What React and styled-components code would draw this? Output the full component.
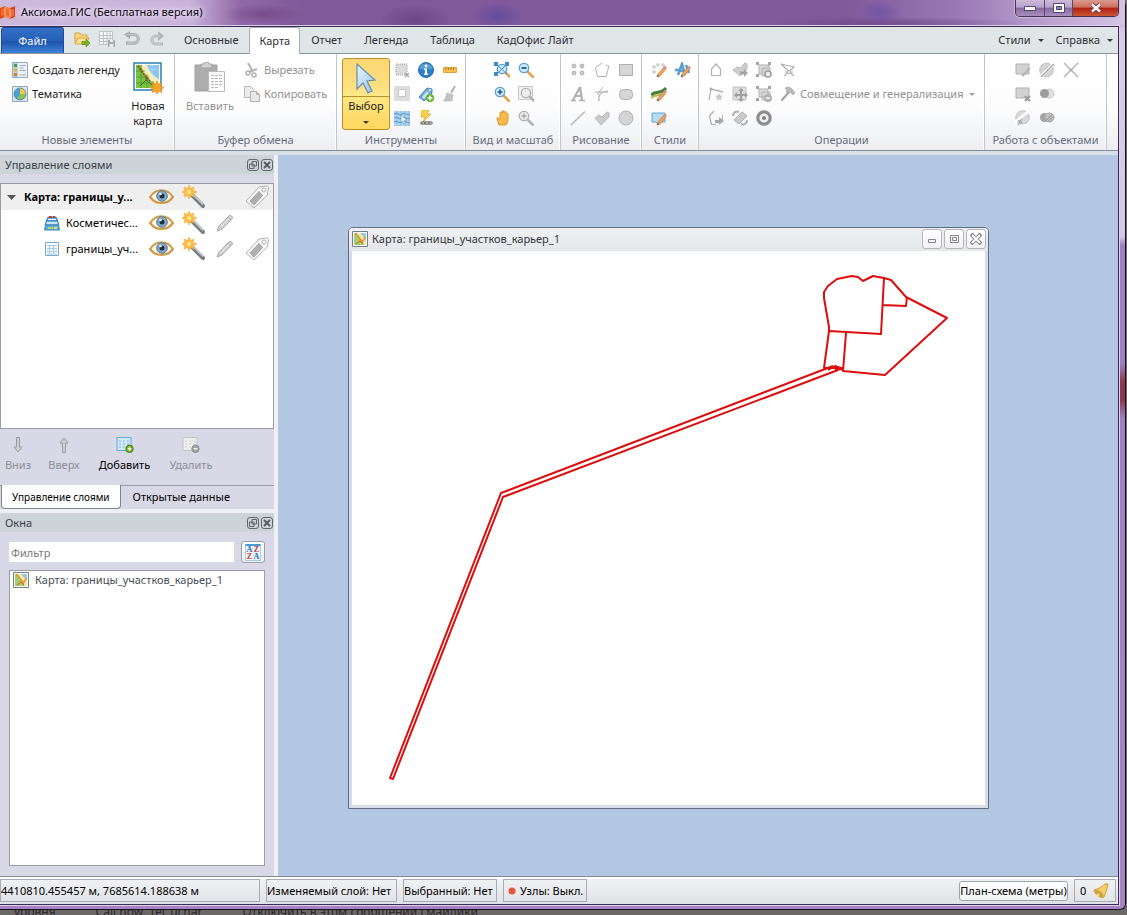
import React from "react";
import styled, { createGlobalStyle, css } from "styled-components";

const Global = createGlobalStyle`
  * { box-sizing: border-box; }
  html, body { margin: 0; padding: 0; }
  body, button, input {
    font-family: "Noto Sans", "Open Sans", "Liberation Sans", sans-serif;
    font-size: 11px;
    line-height: 16px;
  }
  button {
    margin: 0; padding: 0; border: 0; background: none; color: inherit;
    white-space: nowrap; text-align: center;
  }
`;

/* ---------- window frame ---------- */

const Desktop = styled.div`
  min-height: 100vh;
  display: flex;
  flex-direction: column;
  background: #6b6868;
  overflow: hidden;
`;

const Frame = styled.div`
  flex: 1;
  display: flex;
  flex-direction: column;
  margin-right: 1px;
  border-right: 1px solid #17101f;
  border-bottom: 1px solid #17101f;
  border-radius: 0 6px 6px 0;
  background: linear-gradient(180deg, #b9a0cf 0, #d9cce8 4%, #d5c8e6 26%, #a080c0 27%, #a080c0 40%, #8a3850 42%, #8a3850 44%, #a080c0 46%, #a684c4 100%);
`;

const TitleBar = styled.header`
  height: 26px;
  display: flex;
  align-items: flex-start;
  border-bottom: 1px solid #c8b3da;
  background:
    radial-gradient(ellipse 36px 16px at 415px 20px, rgba(80, 38, 110, 0.4), transparent),
    radial-gradient(ellipse 24px 14px at 498px 16px, rgba(70, 62, 160, 0.5), transparent),
    radial-gradient(ellipse 22px 12px at 880px 12px, rgba(90, 70, 165, 0.5), transparent),
    radial-gradient(ellipse 130px 6px at 900px 23px, rgba(80, 45, 110, 0.4), transparent),
    radial-gradient(ellipse 40px 10px at 262px 14px, rgba(105, 55, 110, 0.5), transparent),
    linear-gradient(90deg, #cdb9dc 0, #c9b3da 190px, #8f69a8 240px, #80599b 300px, #80599b 75%, #9a78b4 85%, #c3abd5 95%, #d5c5e4 100%);
`;

const TitleText = styled.h1`
  margin: 0 auto 0 5px;
  padding-top: 4px;
  font-size: 11px;
  font-weight: 400;
  line-height: 16px;
  color: #0b0612;
  text-shadow: 0 0 5px #fff, 0 0 8px #f0e4f8;
`;

const TitleIcon = styled.span`
  padding-top: 5px;
  height: 21px;
`;

const Caption = styled.div`
  display: flex;
  height: 17px;
  margin-right: 6px;
  border: 1px solid #453257;
  border-top: 0;
  border-radius: 0 0 5px 5px;
  overflow: hidden;
  box-shadow: 0 0 0 1px #cbb8da;
`;

const CaptionButton = styled.button`
  width: ${(p) => (p.$close ? 46 : 28)}px;
  display: flex;
  align-items: center;
  justify-content: center;
  border-left: ${(p) => (p.$first ? 0 : "1px solid #5d4770")};
  background: ${(p) =>
    p.$close
      ? "linear-gradient(180deg, #d99a8e 0, #cd6f5e 45%, #b3200f 50%, #cb5636 100%)"
      : "linear-gradient(180deg, #cbbad9 0, #b8a3cc 45%, #86699f 50%, #a98fc0 100%)"};
`;

const Client = styled.div`
  flex: 1;
  display: flex;
  flex-direction: column;
  margin: 0 6px 4px 0;
  border: 1px solid #3b2c55;
  border-left: 0;
  box-shadow: 0 0 0 1px #dccfe9;
  background: #d8dfe6;
  min-width: 0;
`;

const Behind = styled.div`
  height: 5px;
  overflow: hidden;
  display: flex;
  gap: 40px;
  padding-left: 14px;
  font-size: 12px;
  line-height: 10px;
  color: #2b272b;
`;
const BehindText = styled.span`
  height: 10px;
  margin-top: -3px;
`;

/* ---------- ribbon ---------- */

const TabRow = styled.nav`
  height: 27px;
  display: flex;
  align-items: flex-end;
  padding: 0 5px 0 1px;
  background: #e0e5e8;
  border-bottom: 1px solid #8d929c;
`;

const FileButton = styled.button`
  width: 63px;
  height: 26px;
  border: 1px solid #1c4a9c;
  border-bottom: 0;
  border-radius: 3px 3px 0 0;
  color: #fff;
  background: linear-gradient(180deg, #3470c4 0, #2560b8 50%, #1d53ab 55%, #3f83da 100%);
`;

const QuickAccess = styled.div`
  display: flex;
  gap: 1px;
  margin: 0 4px 0 6px;
  height: 26px;
`;

const Tab = styled.button`
  height: 26px;
  padding: 0 ${(p) => (p.$active ? 9 : 11)}px;
  color: #2f2f33;
  ${(p) =>
    p.$active &&
    css`
      height: 27px;
      margin-bottom: -1px;
      border: 1px solid #a9aeb6;
      border-bottom: 0;
      border-radius: 3px 3px 0 0;
      background: #fff;
    `}
`;

const MenuButton = styled.button`
  display: flex;
  align-items: center;
  gap: 7px;
  height: 26px;
  color: #2f2f33;
  margin-left: ${(p) => (p.$push ? "auto" : "12px")};
`;

const Ribbon = styled.div`
  height: 97px;
  display: flex;
  overflow: hidden;
  background: linear-gradient(180deg, #fff 0, #fdfdfe 55%, #eceef1 100%);
  border-bottom: 1px solid #868a93;
`;

const Group = styled.section`
  flex: none;
  width: ${(p) => p.$w}px;
  display: flex;
  flex-direction: column;
  border-right: 1px solid #c3c7cd;
  box-shadow: inset -1px 0 #fff;
`;

const GroupBody = styled.div`
  display: flex;
  height: 76px;
  padding: 4px 0 0 ${(p) => p.$pad || 5}px;
`;

const GroupName = styled.h2`
  margin: 0;
  font-size: 11px;
  font-weight: 400;
  line-height: 20px;
  text-align: center;
  white-space: nowrap;
  color: #666b7c;
`;

const IconGrid = styled.div`
  display: grid;
  grid-template-columns: repeat(${(p) => p.$cols}, 24px);
  grid-auto-rows: 24px;
`;

const IconButton = styled.button`
  width: 24px;
  height: 24px;
  display: grid;
  place-items: center;
`;

const Stack = styled.div`
  display: flex;
  flex-direction: column;
  margin-left: ${(p) => p.$gap || 0}px;
`;

const RowButton = styled.button`
  height: 24px;
  display: flex;
  align-items: center;
  color: ${(p) => (p.disabled ? "#929292" : "#1e1e1e")};
`;

const IconCell = styled.span`
  width: 24px;
  height: 24px;
  display: grid;
  place-items: center;
`;

const BigButton = styled.button`
  width: 48px;
  height: 72px;
  margin-left: ${(p) => p.$gap || 0}px;
  display: flex;
  flex-direction: column;
  align-items: center;
  padding-top: 4px;
  line-height: 15px;
  color: ${(p) => (p.disabled ? "#929292" : "#1e1e1e")};
`;
const BigLabel = styled.span`
  padding-top: 4px;
  white-space: normal;
`;

const SelectButton = styled.button`
  width: 48px;
  height: 72px;
  display: flex;
  flex-direction: column;
  align-items: center;
  border: 1px solid #b98f2a;
  border-radius: 3px;
  color: #1e1e1e;
  background: linear-gradient(180deg, #fbd873 0, #fddf80 40%, #ffe987 52%, #ffe27a 65%, #ffd75e 100%);
`;
const SelectTop = styled.span`
  width: 100%;
  height: 38px;
  display: grid;
  place-items: center;
  border-bottom: 1px solid #b98f2a;
`;
const SelectLabel = styled.span`
  line-height: 18px;
  height: 24px;
`;

/* ---------- docks ---------- */

const Body = styled.div`
  flex: 1;
  display: flex;
  padding-top: 4px;
`;

const Docks = styled.aside`
  flex: none;
  width: 278px;
  display: flex;
  flex-direction: column;
  border-right: 4px solid #eef0f5;
  background: #d8d8e6;
`;

const DockTitle = styled.div`
  height: 19px;
  display: flex;
  align-items: center;
  gap: 2px;
  padding: 0 1px 0 5px;
  background: #ccd3d9;
  color: #3b3f46;
`;
const DockName = styled.h2`
  margin: 0 auto 0 0;
  font-size: 11px;
  font-weight: 400;
`;
const DockButton = styled.button`
  width: 12px;
  height: 12px;
  display: grid;
`;

const Tree = styled.ul`
  list-style: none;
  margin: 9px 0 0;
  padding: 0;
  height: 246px;
  border: 1px solid #9a9aa8;
  background: #fff;
`;

const TreeRow = styled.li`
  height: 26px;
  display: grid;
  grid-template-columns: 144px 32px 33px 30px 33px;
  align-items: center;
  justify-items: center;
  background: ${(p) => (p.$root ? "#efefef" : "#fff")};
  font-weight: ${(p) => (p.$root ? 700 : 400)};
  color: #000;
`;
const TreeName = styled.span`
  justify-self: start;
  width: 100%;
  display: flex;
  align-items: center;
  gap: ${(p) => (p.$root ? 8 : 6)}px;
  padding-left: ${(p) => (p.$root ? 6 : 43)}px;
  white-space: nowrap;
`;
const TreeToggle = styled.button`
  width: 32px;
  height: 26px;
  display: grid;
  place-items: center;
`;

const LayerTools = styled.div`
  height: 56px;
  display: flex;
  align-items: flex-start;
  padding: 8px 0 0 6px;
`;
const LayerTool = styled.button`
  width: ${(p) => p.$w}px;
  display: flex;
  flex-direction: column;
  align-items: center;
  gap: 4px;
  color: ${(p) => (p.disabled ? "#8e8e98" : "#000")};
`;

const DockTabs = styled.div`
  height: 24px;
  display: flex;
  align-items: flex-start;
  border-top: 1px solid #9a9aa8;
`;
const DockTab = styled.button`
  height: ${(p) => (p.$active ? 24 : 22)}px;
  padding: 0 ${(p) => (p.$active ? 10 : 12)}px;
  color: #000;
  ${(p) =>
    p.$active &&
    css`
      margin: -1px 0 0 1px;
      border: 1px solid #7f838c;
      border-top: 0;
      border-radius: 0 0 4px 4px;
      background: #fff;
      font-size: 10px;
    `}
`;

const DockGap = styled.div`
  height: 4px;
  background: #eef0f5;
`;

const FilterRow = styled.div`
  display: flex;
  align-items: center;
  gap: 7px;
  padding: 9px 9px 7px;
`;
const Filter = styled.input`
  flex: 1;
  min-width: 0;
  height: 20px;
  padding: 0 2px;
  border: 0;
  background: #fff;
  color: #222;
  &::placeholder { color: #77777c; opacity: 1; }
`;
const SortButton = styled.button`
  width: 24px;
  height: 22px;
  display: grid;
  place-items: center;
  border: 1px solid #9b9fa8;
  border-radius: 3px;
  background: linear-gradient(180deg, #fff, #eef0f4);
`;

const WindowList = styled.ul`
  flex: 1;
  list-style: none;
  margin: 0 9px 10px;
  padding: 0 3px;
  border: 1px solid #9a9aa8;
  background: #fff;
`;
const WindowItem = styled.li`
  height: 18px;
  display: flex;
  align-items: center;
  gap: 6px;
  color: #4a4d55;
`;

/* ---------- document area ---------- */

const Workspace = styled.main`
  position: relative;
  flex: 1;
  overflow: hidden;
  background: #b3c7e2;
`;

const MapWindow = styled.section`
  position: absolute;
  left: 70px;
  top: 72px;
  width: 641px;
  height: 582px;
  display: flex;
  flex-direction: column;
  border: 1px solid #5f6c82;
  border-radius: 5px 5px 0 0;
  background: #d8dce6;
  padding: 0 3px 3px;
`;
const MapTitle = styled.div`
  height: 23px;
  margin: 0 -3px;
  padding: 0 2px 1px 3px;
  display: flex;
  align-items: center;
  gap: 2px;
  border-radius: 4px 4px 0 0;
  background: linear-gradient(180deg, #eef0f1, #e5e8eb);
  color: #34373d;
`;
const MapName = styled.h2`
  margin: 0 auto 0 2px;
  font-size: 11px;
  font-weight: 400;
`;
const MapButton = styled.button`
  width: 20px;
  height: 20px;
  display: grid;
  place-items: center;
  border: 1px solid #b4b6ba;
  border-radius: 3px;
  background: linear-gradient(180deg, #fff, #f1f1f3);
`;
const MapCanvas = styled.div`
  flex: 1;
  background: #fff;
  display: flex;
`;

/* ---------- status bar ---------- */

const StatusBar = styled.footer`
  height: 28px;
  display: flex;
  align-items: center;
  gap: 6px;
  padding-right: 2px;
  border-top: 1px solid #84888f;
  box-shadow: inset 0 2px #fff;
  background: linear-gradient(180deg, #f2f3f5, #dfe2e5);
  color: #000;
  white-space: nowrap;
`;
const StatusCell = styled.div`
  height: 23px;
  width: ${(p) => p.$w}px;
  display: flex;
  align-items: center;
  gap: ${(p) => p.$gap || 0}px;
  padding-left: ${(p) => p.$pad || 0}px;
  border: 1px solid #a8abb1;
  overflow: hidden;
`;
const StatusSpacer = styled.span`
  flex: 1;
`;
const Projection = styled.button`
  width: 109px;
  height: 20px;
  border: 1px solid #a0a4ab;
  border-radius: 3px;
  background: linear-gradient(180deg, #fff, #f1f2f4);
`;

/* ---------- drawings ---------- */

const Svg = ({ s = 16, w, h, box, children }) => (
  <svg width={w || s} height={h || s} viewBox={box || `0 0 ${w || s} ${h || s}`} fill="none" aria-hidden="true" display="block">
    {children}
  </svg>
);

const Caret = ({ color = "#3a3a3e" }) => (
  <Svg w={6} h={3}><path d="M0 0h6L3 3z" fill={color} /></Svg>
);

const G = "#b0b0b0";
const L = "#dadada";

const Pencil = () => (
  <g>
    <path d="M6 15l1-3 6-7 2 2-6 7z" fill="#f0a55a" stroke="#b06a2b" strokeWidth=".6" />
    <path d="M12.4 5.6l1.6-1.8 2 1.8-1.6 1.8z" fill="#d98a9c" />
    <path d="M6 15l.7-2 1.3 1.3z" fill="#444" />
  </g>
);
const Lens = ({ gray, children, x = 6, y = 6 }) => (
  <g>
    <path d={`M${x + 4} ${y + 4}l5 5`} stroke={gray ? "#b4b4b4" : "#e6a24a"} strokeWidth="2.600" strokeLinecap="round" />
    <circle cx={x} cy={y} r="4.700" fill={gray ? "#ececec" : "#cdeafa"} stroke={gray ? "#b0b0b0" : "#5a9dce"} strokeWidth="1.300" />
    {children}
  </g>
);

const icons = {
  logo: (
    <>
      <path d="M0 3l5-2v11l-5 2z" fill="#e2491f" /><path d="M5 1l5 2v11l-5-2z" fill="#f4844c" /><path d="M10 3l5-2v11l-5 2z" fill="#dc4018" />
      <path d="M1 4l4-1 5 2 4-1v7l-4 1-5-2-4 1z" fill="#f26a30" /><path d="M5 2v10M10 4v9" stroke="#ffd2b0" strokeWidth=".8" />
    </>
  ),
  open: (
    <>
      <path d="M1 12V2h5l1 2h6v3" fill="#f8d87a" stroke="#d6a640" /><path d="M1 13l3-6h11l-3 6z" fill="#fbe39a" stroke="#d6a640" />
      <path d="M8 10.500h4V8l4 4-4 4v-2.500H8z" fill="#7ab51d" stroke="#5a9418" strokeWidth=".7" />
    </>
  ),
  save: (
    <>
      <path d="M.5.500h13v13H.5zM.5 4.500h13M.5 7.500h13M.5 10.500h13M4.500.500v13M8 .500v13M11 .500v13" stroke="#bfc2c5" fill="#f5f6f7" />
      <path d="M9 9h7v7H9z" fill="#a6a9ad" /><path d="M11 9h3v2h-3zM10.500 13h4v3h-4z" fill="#eee" />
    </>
  ),
  undo: <><path d="M2 3.500h8a4.300 4.300 0 0 1 0 8.600H2" stroke="#a9acaf" strokeWidth="3.200" /><path d="M6 0L0 3.500 6 8z" fill="#a9acaf" /><path d="M3 3.500h7a4.300 4.300 0 0 1 0 8.600H3" stroke="#c6c9cb" strokeWidth="1.200" /></>,
  redo: <><path d="M12 5H7a4 4 0 0 0 0 8h7" stroke="#b3b6b9" strokeWidth="3" /><path d="M9 0l6 5-6 5z" fill="#b3b6b9" /><path d="M11 5H7a4 4 0 0 0 0 8h6" stroke="#cfd1d3" strokeWidth="1.200" /></>,
  legend: (
    <>
      <path d="M.5.500h15v15H.5z" fill="#eef4f8" stroke="#93a9b8" /><path d="M1 1h5v14H1z" fill="#b9d3e4" />
      <path d="M2 2h3v3H2z" fill="#4c9a3a" /><path d="M2 6.500h3v3H2z" fill="#f0b030" /><path d="M2 11h3v3H2z" fill="#e87820" />
      <path d="M7.500 3.500H14M7.500 6H12M7.500 8.500H14M7.500 13H14" stroke="#98acba" />
    </>
  ),
  theme: (
    <>
      <path d="M.5.500h15v15H.5z" fill="#dbe7ef" stroke="#93a9b8" /><circle cx="8" cy="8" r="6" fill="#49a0d6" />
      <path d="M8 8V2a6 6 0 0 1 6 6z" fill="#f5c842" /><path d="M8 8h6a6 6 0 0 1-9 5z" fill="#8cc152" /><circle cx="8" cy="8" r="6" stroke="#3980a8" strokeWidth=".7" />
    </>
  ),
  newMap: (
    <>
      <path d="M2 1h27v27H2z" fill="#fff" stroke="#2d7fae" strokeWidth="1.500" /><path d="M4 3h23v23H4z" fill="#7cc23c" />
      <path d="M12 3h15v16C21 16 15 10 12 3z" fill="#86c6f0" /><path d="M9 3h6c2 6 6 11 12 14v7C19 21 12 12 9 3z" fill="#f7ecbe" />
      <path d="M4 9h9M4 15h13M4 21h18M9 3v23M15 12v14M21 19v7" stroke="#4d9c3a" strokeWidth=".8" /><path d="M15 7h12M20 3v9" stroke="#b4dcf5" strokeWidth=".8" />
      <path d="M6 4c3 5 7 10 12 15" stroke="#b52a1a" strokeWidth="1.500" strokeDasharray="2 1" /><path d="M8 24l6-6 6 5M14 18v-3" stroke="#3e6f20" />
      <path d="M25 19l1.500 3.200 3.300-1.200-1.200 3.300 3.200 1.500-3.200 1.400 1.200 3.300-3.300-1.200L25 32l-1.500-2.700-3.300 1.200 1.200-3.300-3.200-1.400 3.200-1.500-1.200-3.300 3.300 1.200z" fill="#f9a52a" stroke="#ee8a1a" strokeWidth=".7" />
    </>
  ),
  paste: (
    <>
      <path d="M1 3h22v26H1z" fill="#adadad" stroke="#a0a0a0" /><path d="M7 2h3l1-2h3l1 2h3v4H7z" fill="#d2d2d2" stroke="#a0a0a0" />
      <path d="M14.500 9.500h16v20h-16z" fill="#fbfbfb" stroke="#bababa" />
      <path d="M17 13.500h11M17 16.500h11M17 19.500h11M17 22.500h11M17 25.500h8" stroke="#b8b8b8" strokeDasharray="3 1" />
    </>
  ),
  cut: <><path d="M4 1l5 9M13 7l-8 3" stroke="#b4b4b4" strokeWidth="2" /><circle cx="4" cy="11" r="2" stroke={G} strokeWidth="1.500" /><circle cx="10" cy="13" r="2" stroke={G} strokeWidth="1.500" /></>,
  copy: <><path d="M.5.500h6l3 3v8h-9z" fill="#ececec" stroke="#b8b8b8" /><path d="M6.500 5.500h6l3 3v7h-9z" fill="#e8e8e8" stroke={G} /><path d="M12.500 5.500v3h3" stroke={G} /></>,
  arrow: (
    <>
      <defs>
        <linearGradient id="arrowFill" x1="0" y1="0" x2="1" y2="1"><stop offset="0" stopColor="#f0f7fc" /><stop offset="1" stopColor="#8fc0e6" /></linearGradient>
      </defs>
      <path d="M7 2l18 16-8 1 5 10-4 2-5-10-6 6z" fill="url(#arrowFill)" stroke="#5e8fb6" strokeWidth="1.200" />
    </>
  ),
  selRect: <><path d="M2 2h11v11H2z" fill="#dcdcdc" stroke="#a2a2a2" strokeDasharray="1 1" /><path d="M11 11l4 4M15 11l-4 4" stroke="#a8a8a8" strokeWidth="1.500" /></>,
  info: <><circle cx="8" cy="8" r="7.500" fill="#2f80c8" stroke="#2a6cab" /><path d="M1.500 7a6.500 5.500 0 0 1 13 0z" fill="#6eb0e4" opacity=".6" /><circle cx="8" cy="4" r="1.400" fill="#fff" /><path d="M6 6.500h3v5h1V13H6v-1.500h1V8H6z" fill="#fff" /></>,
  ruler: <><path d="M1.500 5.500h13v5h-13z" fill="#f8c052" stroke="#dda03a" /><path d="M4 6v2M6.500 6v2M9 6v2M11.500 6v2" stroke="#a87420" /></>,
  frame: <><path d="M0 0h16v15H0z" fill="#dcdcdc" /><path d="M4.500 3.500h7v7h-7z" fill="#fff" stroke="#c4c4c4" /></>,
  tagPlus: <><path d="M1 11L9 2l5 1v4l-8 8z" fill="#6ba9d8" stroke="#5587b0" /><path d="M4 11l5-6 2 2-5 6z" fill="#c8e4f5" /><circle cx="12" cy="4" r="1" fill="#fff" /><circle cx="12" cy="12" r="4" fill="#62b028" /><path d="M12 9.500v5M9.500 12h5" stroke="#fff" strokeWidth="1.500" /></>,
  broom: <><path d="M13 0L9 7" stroke="#b0b0b0" strokeWidth="2" /><path d="M5 7l6 2-1 6H1c3-2 3-5 4-8z" fill="#c9c9c9" stroke="#b0b0b0" strokeWidth=".7" /><path d="M4 14l2-5M7 14l1-5" stroke="#a8a8a8" strokeWidth=".7" /></>,
  waves: <><path d="M0 1h16v15H0z" fill="#9cc8ea" /><path d="M0 4q2-2 4 0t4 0 4 0 4 0M0 8q2-2 4 0t4 0 4 0 4 0M0 12q2-2 4 0t4 0 4 0 4 0" stroke="#5d97c8" /><path d="M0 2h16M0 6h16M0 10h16M0 14h16" stroke="#c7e3f7" strokeDasharray="2 2" /><path d="M7 5l6 5-3 .5 1.500 3-1.500.5-1.500-3L7 13z" fill="#e8f4fc" stroke="#6c99bb" strokeWidth=".6" /></>,
  bolt: <><path d="M4 0h7L9 4h4L5 12l2-5H3z" fill="#fbd04a" stroke="#e0ab30" strokeWidth=".8" /><path d="M4 13h9" stroke="#7d7a74" strokeWidth="3.600" strokeLinecap="round" /><path d="M4 13h2M8 13h2M11.500 13h2" stroke="#ddd" /></>,
  zoomExt: <><Lens x={8} y={7} /><path d="M2 2l11 10M13 2L3 12" stroke="#4c92c8" strokeWidth="1" /><path d="M0 0h4v4H0zM11 0h4v4h-4zM0 10h4v4H0z" fill="#3f8bc8" /></>,
  zoomOut: <Lens><path d="M3.500 6h5" stroke="#1e5c94" strokeWidth="1.800" /></Lens>,
  zoomIn: <Lens><path d="M3.500 6h5M6 3.500v5" stroke="#1e5c94" strokeWidth="1.600" /></Lens>,
  zoomLayer: <><path d="M.5.500h14v13H.5z" fill="#efefef" stroke="#c8c8c8" /><Lens gray x={8} y={7} /></>,
  hand: <path d="M3 15L1 9c-.5-1.500 1-2 2-.5l1 1V3c0-1.500 2-1.500 2 0V2c0-1.800 2-1.800 2 0v.5c.3-1.500 2-1.300 2 .3V4c.3-1.200 2-1 2 .3V11l-2 4z" transform="translate(2 0)" fill="#f8bb4a" stroke="#d8912c" strokeWidth=".9" />,
  zoomSel: <Lens gray><path d="M3.500 6h5M6 3.500v5" stroke="#a4a4a4" strokeWidth="1.400" /></Lens>,
  points: <>{[[4, 4], [12, 4], [4, 11], [12, 11]].map(([x, y]) => <circle key={x + "-" + y} cx={x} cy={y} r="1.900" fill="#cfcfcf" stroke="#adadad" />)}</>,
  polyline: <path d="M8 1L1.500 6l2 8.500h8.500L15 4l-3-1" stroke={G} />,
  rect: <path d="M1.500 2.500h13v11h-13z" fill="#d6d6d6" stroke={G} />,
  text: <><path d="M10 1l2 13M10 1L3 14M6 10h6" stroke={G} strokeWidth="2.200" /><path d="M1 14.500h5M9 14.500h6" stroke={G} strokeWidth="1.400" /></>,
  arc: <><path d="M5 15c-1-6 1-9 9-10" stroke={G} strokeWidth="1.200" /><path d="M1 6h13M9 1L3 9" stroke={G} /></>,
  round: <rect x="1.500" y="3.500" width="13" height="10" rx="4" fill="#d6d6d6" stroke={G} />,
  line: <path d="M1 15L15 1.500" stroke={G} strokeWidth="1.200" />,
  poly: <path d="M1 8l4-3 3 2 5-5 2 1v4l-8 8z" fill="#cbcbcb" stroke={G} strokeWidth=".8" />,
  ellipse: <circle cx="8" cy="8" r="7" fill="#d4d4d4" stroke={G} />,
  ptStyle: <><g fill="#d8d8d8" stroke="#bbb" strokeWidth=".5"><circle cx="3" cy="5" r="1.500" /><circle cx="7" cy="3" r="1.500" /><circle cx="3" cy="10" r="1.500" /><circle cx="12" cy="3" r="1.500" /></g><Pencil /></>,
  txtStyle: <><path d="M3 13L7 2l3 11M4 9h10M11 3l3 8M0 8h5" stroke="#5b9fd2" strokeWidth="2.600" /><Pencil /></>,
  lineStyle: <><path d="M0 9C5 4 10 9 15 2" stroke="#4a7f3e" strokeWidth="3.200" /><path d="M0 12C5 7 10 12 15 5" stroke="#b9b84a" strokeWidth="2" /><Pencil /></>,
  regStyle: <><path d="M1 3h13v9H9l-2 2-2-2H1z" fill="#b5daf2" stroke="#6aa3cc" /><Pencil /></>,
  house: <path d="M3.500 13.500V7L8 2l4.500 5v6.500z" stroke={G} strokeWidth="1.200" />,
  polyAdd: <><path d="M1 8l4-3 3 1 5-5 2 1v5l-7 7z" fill="#cdcdcd" stroke="#bcbcbc" /><path d="M8 9.500h4V7l4 4-4 4v-2.500H8z" fill="#a4a4a4" /></>,
  groupGear: <><path d="M3 3h10v9H3z" fill={L} stroke={G} /><path d="M6 6h8v8H6z" fill="#d2d2d2" stroke={G} /><g fill="#a4a4a4"><path d="M0 0h3v3H0zM12 0h3v3h-3zM0 12h3v3H0z" /></g><circle cx="12" cy="12" r="3" fill="#eee" stroke="#9c9c9c" strokeWidth="1.500" /></>,
  node: <><path d="M1 2l13 3-10 9M14 14L1 2" stroke={G} strokeWidth="1.200" /><path d="M5 10h8" stroke={G} /><circle cx="9" cy="10" r="1.500" fill="#fff" stroke={G} /></>,
  lineStar: <><path d="M1 14L3 3l12 3" stroke={G} strokeWidth="1.300" /><circle cx="3" cy="3" r="1.600" fill={G} /><path d="M11 7l1.200 2.600 3 .2-2.300 2 .8 3-2.700-1.600-2.700 1.600.8-3-2.300-2 3-.2z" fill="#cacaca" /></>,
  move: <><path d="M1 1h13v13H1z" fill="#dcdcdc" stroke="#c4c4c4" /><path d="M9 4v10M4 9h10" stroke="#a0a0a0" strokeWidth="2" /><path d="M9 2l3 3H6zM9 16l3-3H6zM16 9l-3-3v6zM2 9l3-3v6z" fill="#a0a0a0" /></>,
  groupMinus: <><path d="M3 3h9v8H3zM6 6h8v8H6z" fill={L} stroke={G} /><path d="M0 0h3v3H0zM12 0h3v3h-3zM0 12h3v3H0z" fill="#a4a4a4" /><circle cx="12" cy="12" r="4" fill="#b0b0b0" /><path d="M10 12h4" stroke="#fff" strokeWidth="1.500" /></>,
  hammer: <><path d="M9 6L2 14" stroke="#a4a4a4" strokeWidth="2.200" strokeLinecap="round" /><path d="M5 2l4-1 3 2 3 4-2 2-3-3-2 1-2-1 1-2z" fill="#bababa" stroke="#a4a4a4" strokeWidth=".7" /></>,
  pentArrow: <><path d="M6 1L1.500 6l2 8.500H8" stroke={G} strokeWidth="1.200" /><path d="M14.500 5v5" stroke={G} /><path d="M7 10h4V7l5 4-5 4v-2H7z" fill="#a8a8a8" /></>,
  rotate: <><path d="M2 10l8-8 5 4-8 8z" fill="#cacaca" stroke={G} /><path d="M1 6c0-4 3-5 6-4M15 10c0 4-3 5-6 4" stroke={G} strokeWidth="2" /></>,
  target: <><circle cx="8" cy="8" r="6.200" stroke="#8d8d8d" strokeWidth="3.200" fill="#f0f0f0" /><circle cx="8" cy="8" r="2" fill="#808080" /></>,
  objEdit: <><path d="M1 2h13v10H1z" fill="#d2d2d2" stroke={G} /><path d="M6 14l8-9 1.500 1.500-7 8z" fill="#b6b6b6" /></>,
  objSplit: <><circle cx="7.500" cy="8" r="6.800" fill="#d4d4d4" stroke="#c0c0c0" /><path d="M1 15L15 2" stroke="#fff" strokeWidth="3" /><path d="M2 15L15 2" stroke="#a4a4a4" strokeWidth="1.300" /></>,
  cross: <><path d="M1 1l14 14M15 1L1 15" stroke="#adadad" strokeWidth="1.200" /><circle cx="8" cy="8" r="1.500" fill="#b4b4b4" /></>,
  objDel: <><path d="M1 2h13v10H1z" fill="#d2d2d2" stroke={G} /><path d="M10 10l5 5M15 10l-5 5" stroke="#999" strokeWidth="2" /></>,
  union: <><circle cx="10.500" cy="7.500" r="4.500" fill="#e0e0e0" stroke="#c4c4c4" /><circle cx="5.500" cy="7.500" r="4.500" fill="#9c9c9c" /></>,
  objCut: <><circle cx="7.500" cy="7.500" r="6.800" fill="#d8d8d8" stroke="#c4c4c4" /><path d="M0 12L14 1" stroke="#fff" strokeWidth="2.600" /><path d="M2 9l6 7h4z" fill="#fff" /><path d="M3 10l5 4M7 9l-4 6" stroke="#a4a4a4" strokeWidth="1.300" /></>,
  intersect: <><circle cx="5.500" cy="7.500" r="4.500" fill="#a4a4a4" /><circle cx="10.500" cy="7.500" r="4.500" fill="#c4c4c4" stroke="#a4a4a4" /><path d="M7 10.500l6-6M9 11.500l5-5" stroke="#8a8a8a" /></>,
};

const Icon = ({ name, s = 16 }) => <Svg s={s}>{icons[name]}</Svg>;

const Eye = () => (
  <Svg w={25} h={18}>
    <path d="M1 9C7 0 18 0 24 9 18 17 7 17 1 9z" fill="#fdf6e6" stroke="#d09a48" strokeWidth="2.200" />
    <circle cx="13" cy="8" r="5.300" fill="#84a9c6" stroke="#577b98" /><circle cx="13" cy="8" r="2.500" fill="#1b2f3e" /><circle cx="11.500" cy="6" r="1.300" fill="#e8f4ff" />
  </Svg>
);
const Wand = () => (
  <Svg w={24} h={24}>
    <path d="M9 9l12 12" stroke="#777b7e" strokeWidth="4" strokeLinecap="round" /><path d="M10 8.500l11 11" stroke="#c9cccf" strokeWidth="1.500" />
    <path d="M7 0l1.500 3.500L12 2l-1 3.500 4 1.500-4 1.500 1 3.500-3.500-1.500L7 14l-1.500-3.500L2 12l1-3.500L0 7l3-1.500L2 2l3.500 1.500z" fill="#fabd45" stroke="#f3a732" strokeWidth=".6" />
    <circle cx="7" cy="7" r="2" fill="#ffe695" />
  </Svg>
);
const GrayPencil = () => (
  <Svg w={18} h={18}><path d="M1 17l2-5L14 1l3 2.500L6 15z" fill="#d0d0d0" stroke="#a8a8a8" /><path d="M4.500 13L14.500 3" stroke="#f4f4f4" /><path d="M12 3l3 3" stroke="#aaa" /></Svg>
);
const Tag = () => (
  <Svg w={24} h={24}>
    <path d="M1 16L14 2l8-1c1 0 1.500 1 1.500 2l-1 7L9 23z" fill="#f5f5f5" stroke="#b2b2b2" /><path d="M5 16l9-9.500 3.500 4L9 20z" fill="#b0b0b0" stroke="#a0a0a0" />
    <circle cx="19" cy="5" r="2" fill="#fff" stroke="#b2b2b2" />
  </Svg>
);
const Cosmetic = () => (
  <Svg s={16}>
    <path d="M4 2h8l2 4H2z" fill="#5aa9e2" stroke="#3c82bc" /><path d="M2.500 6h11L15 10H1z" fill="#9ad0f3" stroke="#3c82bc" /><path d="M1.500 10h13l1 5H.5z" fill="#62abe0" stroke="#3c82bc" />
    <path d="M5 1h3v2H5zM9 1h2v2H9z" fill="#c83a34" /><path d="M4 12h5v2H4z" fill="#b4d85a" /><path d="M10 12h3v2h-3z" fill="#f2dc6a" /><path d="M3 8h10M4 4.500h8" stroke="#fff" />
  </Svg>
);
const TableIcon = () => (
  <Svg s={16}><path d="M1.500 1.500h13v13h-13z" fill="#f4f9fd" stroke="#7ba8cf" /><path d="M3 4.500h10M3 7.500h10M3 10.500h10M3 13h10M5.500 4v9M9.500 4v9" stroke="#a9c8e5" /></Svg>
);
const MapIcon = () => (
  <Svg s={16}>
    <path d="M.5.500h15v15H.5z" fill="#fff" stroke="#6b8288" /><path d="M2 2h12v12H2z" fill="#a4cc70" /><path d="M8 2h6v7z" fill="#96c8ea" /><path d="M4 2h4l6 7v5h-2z" fill="#f8e6a0" />
    <path d="M3.500 2l7 9 3-5" stroke="#e2902e" strokeWidth="1.400" /><path d="M4 13l4-3 3 3" stroke="#d0602c" />
  </Svg>
);
const Move = ({ up }) => (
  <Svg w={16} h={16}><path d={up ? "M8 1l4 5H9.500v9.500h-3V6H4z" : "M8 15l4-5H9.500V.5h-3V10H4z"} fill="#cfcfd6" stroke="#9a9aa2" /></Svg>
);
const LayerAdd = ({ off }) => (
  <Svg w={18} h={16}>
    <path d="M1 .5h14v13H1z" fill={off ? "#eee" : "#cfe9fb"} stroke={off ? "#c4c4c4" : "#62aade"} />
    <path d="M3 4h10M3 7h10M3 10h10" stroke={off ? "#dfdfdf" : "#a4d0ef"} strokeWidth="2" strokeDasharray="2 2" />
    <circle cx="13.500" cy="11.800" r="3.700" fill={off ? "#a2a2a2" : "#6cad1b"} stroke={off ? "#8e8e8e" : "#4a8110"} />
    <path d={off ? "M11.500 11.800h4" : "M11.500 11.800h4M13.500 9.800v4"} stroke="#fff" strokeWidth="1.300" />
  </Svg>
);
const FloatIcon = () => <Svg s={12}><rect x=".5" y=".5" width="11" height="11" rx="2.500" stroke="#62656b" /><path d="M5 2.500h4.500V7H5zM2.500 5H7v4.500H2.500z" stroke="#62656b" fill="#ccd3d9" /></Svg>;
const CloseIcon = () => <Svg s={12}><rect x=".5" y=".5" width="11" height="11" rx="2.500" stroke="#62656b" /><path d="M3 3l6 6M9 3L3 9" stroke="#585b61" strokeWidth="2" /></Svg>;

const SortGlyph = styled.span`
  display: grid;
  grid-template-columns: 7px 7px;
  grid-auto-rows: 7px;
  border: 1px solid #a8cbe2;
  border-top: 2px solid #4a9ad0;
  background: #e8f3fa;
  font-family: "Liberation Serif", serif;
  font-size: 8px;
  font-weight: 700;
  line-height: 7px;
`;
const SortLetter = styled.span`
  color: ${(p) => (p.$red ? "#c33a2c" : "#2868a6")};
`;

/* ---------- parts ---------- */

const Tools = ({ cols, names }) => (
  <IconGrid $cols={cols}>
    {names.map((n, i) => (n ? <IconButton key={i} aria-label={n}><Icon name={n} /></IconButton> : <span key={i} />))}
  </IconGrid>
);

const RibbonGroup = ({ name, w, pad, children }) => (
  <Group $w={w}>
    <GroupBody $pad={pad}>{children}</GroupBody>
    <GroupName>{name}</GroupName>
  </Group>
);

const DockHeader = ({ name }) => (
  <DockTitle>
    <DockName>{name}</DockName>
    <DockButton aria-label="Открепить"><FloatIcon /></DockButton>
    <DockButton aria-label="Закрыть"><CloseIcon /></DockButton>
  </DockTitle>
);

const layers = [
  { name: "Карта: границы_у...", root: true, tag: true },
  { name: "Косметичес...", icon: <Cosmetic />, pencil: true },
  { name: "границы_уч...", icon: <TableIcon />, pencil: true, tag: true },
];

const MapDrawing = () => (
  <svg width="100%" height="100%" viewBox="352 251 633 554" preserveAspectRatio="xMinYMin meet" fill="none" stroke="#dc0e0e" strokeWidth="2" strokeLinejoin="round">
    <path d="M829 331v-4l-5-29v-6l4-6 9-7 15-3 6 1 5 4 10-5 11 2 7 2 15 17 41 21-62 57-42-4 3-38" />
    <path d="M829 331l52 3 3-56M883 305l23 1 1-9M829 331l-5 37h19" />
    <path d="M833 366L501 493 390 778l3 1L503 497 838 370" />
    <path d="M828 370l7-4 8 3-8 1" />
  </svg>
);

export default function App() {
  return (
    <Desktop>
      <Global />
      <Frame>
        <TitleBar>
          <TitleIcon><Icon name="logo" /></TitleIcon>
          <TitleText>Аксиома.ГИС (Бесплатная версия)</TitleText>
          <Caption>
            <CaptionButton $first aria-label="Свернуть"><Svg w={12} h={5}><path d="M.5.500h11v4H.5z" fill="#fff" stroke="#55456a" /></Svg></CaptionButton>
            <CaptionButton aria-label="Развернуть"><Svg w={12} h={10}><path d="M.5.500h11v9H.5z" fill="#fff" stroke="#55456a" /><path d="M3.500 3.500h5v3h-5z" fill="#9a82b0" stroke="#55456a" /></Svg></CaptionButton>
            <CaptionButton $close aria-label="Закрыть"><Svg w={12} h={10}><path d="M2 1.500l8 7M10 1.500l-8 7" stroke="#5d3a44" strokeWidth="4" /><path d="M2 1.500l8 7M10 1.500l-8 7" stroke="#fff" strokeWidth="2.400" /></Svg></CaptionButton>
          </Caption>
        </TitleBar>
        <Client>
          <TabRow>
            <FileButton>Файл</FileButton>
            <QuickAccess>
              {["open", "save", "undo", "redo"].map((n) => <IconButton key={n} aria-label={n}><Icon name={n} /></IconButton>)}
            </QuickAccess>
            <Tab>Основные</Tab>
            <Tab $active>Карта</Tab>
            <Tab>Отчет</Tab>
            <Tab>Легенда</Tab>
            <Tab>Таблица</Tab>
            <Tab>КадОфис Лайт</Tab>
            <MenuButton $push>Стили<Caret /></MenuButton>
            <MenuButton>Справка<Caret /></MenuButton>
          </TabRow>
          <Ribbon>
            <RibbonGroup name="Новые элементы" w={175} pad={8}>
              <Stack>
                <RowButton><IconCell><Icon name="legend" /></IconCell>Создать легенду</RowButton>
                <RowButton><IconCell><Icon name="theme" /></IconCell>Тематика</RowButton>
              </Stack>
              <BigButton $gap={4}><Icon name="newMap" s={32} /><BigLabel>Новая карта</BigLabel></BigButton>
            </RibbonGroup>
            <RibbonGroup name="Буфер обмена" w={162} pad={11}>
              <BigButton disabled><Icon name="paste" s={32} /><BigLabel>Вставить</BigLabel></BigButton>
              <Stack $gap={6}>
                <RowButton disabled><IconCell><Icon name="cut" /></IconCell>Вырезать</RowButton>
                <RowButton disabled><IconCell><Icon name="copy" /></IconCell>Копировать</RowButton>
              </Stack>
            </RibbonGroup>
            <RibbonGroup name="Инструменты" w={129}>
              <SelectButton>
                <SelectTop><Icon name="arrow" s={32} /></SelectTop>
                <SelectLabel>Выбор</SelectLabel>
                <Caret />
              </SelectButton>
              <Tools cols={3} names={["selRect", "info", "ruler", "frame", "tagPlus", "broom", "waves", "bolt"]} />
            </RibbonGroup>
            <RibbonGroup name="Вид и масштаб" w={95} pad={24}>
              <Tools cols={2} names={["zoomExt", "zoomOut", "zoomIn", "zoomLayer", "hand", "zoomSel"]} />
            </RibbonGroup>
            <RibbonGroup name="Рисование" w={81}>
              <Tools cols={3} names={["points", "polyline", "rect", "text", "arc", "round", "line", "poly", "ellipse"]} />
            </RibbonGroup>
            <RibbonGroup name="Стили" w={57}>
              <Tools cols={2} names={["ptStyle", "txtStyle", "lineStyle", null, "regStyle"]} />
            </RibbonGroup>
            <RibbonGroup name="Операции" w={286}>
              <Tools cols={3} names={["house", "polyAdd", "groupGear", "lineStar", "move", "groupMinus", "pentArrow", "rotate", "target"]} />
              <Stack>
                <RowButton disabled aria-label="Узел"><IconCell><Icon name="node" /></IconCell></RowButton>
                <RowButton disabled><IconCell><Icon name="hammer" /></IconCell>Совмещение и генерализация&nbsp;&nbsp;<Caret color="#a0a0a0" /></RowButton>
              </Stack>
            </RibbonGroup>
            <RibbonGroup name="Работа с объектами" w={122} pad={26}>
              <Tools cols={3} names={["objEdit", "objSplit", "cross", "objDel", "union", null, "objCut", "intersect"]} />
            </RibbonGroup>
          </Ribbon>
          <Body>
            <Docks>
              <DockHeader name="Управление слоями" />
              <Tree>
                {layers.map((l) => (
                  <TreeRow key={l.name} $root={l.root}>
                    <TreeName $root={l.root}>{l.root ? <Svg w={9} h={5}><path d="M0 0h9L4.500 5z" fill="#555" /></Svg> : l.icon}{l.name}</TreeName>
                    <TreeToggle aria-label="Видимость"><Eye /></TreeToggle>
                    <TreeToggle aria-label="Стиль"><Wand /></TreeToggle>
                    {l.pencil ? <TreeToggle aria-label="Правка"><GrayPencil /></TreeToggle> : <span />}
                    {l.tag && <TreeToggle aria-label="Подписи"><Tag /></TreeToggle>}
                  </TreeRow>
                ))}
              </Tree>
              <LayerTools>
                <LayerTool $w={24} disabled><Move />Вниз</LayerTool>
                <LayerTool $w={68} disabled><Move up />Вверх</LayerTool>
                <LayerTool $w={53}><LayerAdd />Добавить</LayerTool>
                <LayerTool $w={80} disabled><LayerAdd off />Удалить</LayerTool>
              </LayerTools>
              <DockTabs>
                <DockTab $active>Управление слоями</DockTab>
                <DockTab>Открытые данные</DockTab>
              </DockTabs>
              <DockGap />
              <DockHeader name="Окна" />
              <FilterRow>
                <Filter type="text" placeholder="Фильтр" aria-label="Фильтр" />
                <SortButton aria-label="Сортировка">
                  <SortGlyph><SortLetter>A</SortLetter><SortLetter $red>Z</SortLetter><SortLetter $red>Z</SortLetter><SortLetter>A</SortLetter></SortGlyph>
                </SortButton>
              </FilterRow>
              <WindowList>
                <WindowItem><MapIcon />Карта: границы_участков_карьер_1</WindowItem>
              </WindowList>
            </Docks>
            <Workspace>
              <MapWindow>
                <MapTitle>
                  <MapIcon />
                  <MapName>Карта: границы_участков_карьер_1</MapName>
                  <MapButton aria-label="Свернуть"><Svg w={10} h={10}><path d="M1.500 5.500h7v3h-7z" stroke="#85878c" /></Svg></MapButton>
                  <MapButton aria-label="Развернуть"><Svg w={10} h={10}><path d="M1.500 1.500h8v7h-8zM3.500 3.500h4v3h-4z" stroke="#85878c" /></Svg></MapButton>
                  <MapButton aria-label="Закрыть"><Svg w={12} h={12}><path d="M1 1l10 10M11 1l-10 10" stroke="#85878c" strokeWidth="4" /><path d="M2 2l8 8M10 2l-8 8" stroke="#fff" strokeWidth="2" /></Svg></MapButton>
                </MapTitle>
                <MapCanvas><MapDrawing /></MapCanvas>
              </MapWindow>
            </Workspace>
          </Body>
          <StatusBar>
            <StatusCell $w={260}>4410810.455457 м, 7685614.188638 м</StatusCell>
            <StatusCell $w={131}>Изменяемый слой: Нет</StatusCell>
            <StatusCell $w={94}>Выбранный: Нет</StatusCell>
            <StatusCell $w={84} $pad={4} $gap={4}><Svg s={8}><circle cx="4" cy="4" r="3.500" fill="#e4553f" /></Svg>Узлы: Выкл.</StatusCell>
            <StatusSpacer />
            <Projection>План-схема (метры)</Projection>
            <StatusCell $w={42} $pad={5} $gap={7}>0<Svg s={16}><path d="M15 1c-1 5-2 8-4 13C8 16 1 11 1 7c4-1 8-3 11-6z" fill="#f3cf63" stroke="#cfa040" /><ellipse cx="6" cy="10.500" rx="5.500" ry="2.500" transform="rotate(38 6 10.500)" fill="#cfa244" /><circle cx="5" cy="12" r="1.500" fill="#f7dc84" /></Svg></StatusCell>
          </StatusBar>
        </Client>
      </Frame>
      <Behind>
        <BehindText>уровня</BehindText>
        <BehindText>Call now, Тег uchar</BehindText>
        <BehindText>Отключить в этом сообщении смайлики</BehindText>
      </Behind>
    </Desktop>
  );
}
